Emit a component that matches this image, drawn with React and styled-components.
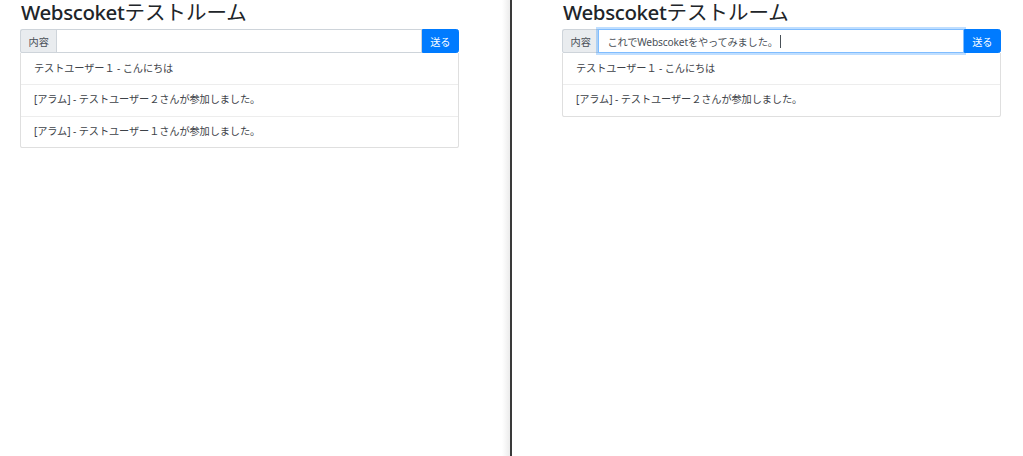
import React from "react";
import styled, { createGlobalStyle } from "styled-components";

const GlobalStyle = createGlobalStyle`
  html, body {
    margin: 0;
    padding: 0;
    background: #fff;
  }
  body {
    font-family: "Noto Sans", "Noto Sans CJK JP", sans-serif;
    color: #212529;
  }
`;

const rooms = [
  {
    side: "left",
    typing: "",
    focused: false,
    messages: [
      "テストユーザー１ - こんにちは",
      "[アラム] - テストユーザー２さんが参加しました。",
      "[アラム] - テストユーザー１さんが参加しました。",
    ],
  },
  {
    side: "right",
    typing: "これでWebscoketをやってみました。",
    focused: true,
    messages: [
      "テストユーザー１ - こんにちは",
      "[アラム] - テストユーザー２さんが参加しました。",
    ],
  },
];

const App = () => {
  return (
    <Screen>
      <GlobalStyle />
      {rooms.map((room, index) => (
        <React.Fragment key={room.side}>
          {index > 0 && <Divider />}
          <Pane side={room.side}>
            <Room>
              <Title>
                Webscoket<TitleJa>テストルーム</TitleJa>
              </Title>
              <InputGroup>
                <Addon>内容</Addon>
                <Field focused={room.focused}>
                  {room.typing}
                  {room.focused && <Caret />}
                </Field>
                <SendButton>送る</SendButton>
              </InputGroup>
              <List>
                {room.messages.map((msg, i) => (
                  <Item key={i}>{msg}</Item>
                ))}
              </List>
            </Room>
          </Pane>
        </React.Fragment>
      ))}
    </Screen>
  );
};

const Screen = styled.div`
  display: flex;
  width: 100%;
  height: 100vh;
  overflow: hidden;
`;

const Pane = styled.div`
  box-sizing: border-box;
  flex: ${(props) => (props.side === "left" ? "0 0 510px" : "1")};
  padding-left: ${(props) => (props.side === "left" ? "20px" : "50px")};
  background: ${(props) =>
    props.side === "left"
      ? "linear-gradient(to right, #fff 0, #fff 502px, #f3f3f3 507px, #ebebeb 510px)"
      : "#fff"};
`;

const Divider = styled.div`
  flex: 0 0 2px;
  background: #3a3a3a;
`;

const Room = styled.div`
  width: 439px;
`;

const Title = styled.h2`
  margin: 0 0 4px 1px;
  font-size: 20.5px;
  font-weight: 500;
  line-height: 25px;
  color: #212529;
  letter-spacing: -0.4px;
`;

const TitleJa = styled.span`
  font-weight: 400;
  letter-spacing: 0;
`;

const InputGroup = styled.div`
  display: flex;
  align-items: stretch;
  height: 24px;
  font-size: 10.2px;
`;

const Addon = styled.div`
  display: flex;
  align-items: center;
  box-sizing: border-box;
  padding: 0 7.5px;
  background: #e9ecef;
  color: #495057;
  border: 1px solid #ced4da;
  border-right: none;
  border-radius: 2.6px 0 0 2.6px;
`;

const Field = styled.div`
  flex: 1;
  display: flex;
  align-items: center;
  box-sizing: border-box;
  padding: 0 8px;
  color: #495057;
  border: 1px solid ${(props) => (props.focused ? "#80bdff" : "#ced4da")};
  box-shadow: ${(props) =>
    props.focused ? "0 0 0 2px rgba(0, 123, 255, 0.25)" : "none"};
  position: relative;
  z-index: ${(props) => (props.focused ? 1 : 0)};
  white-space: nowrap;
  letter-spacing: -0.15px;
`;

const Caret = styled.span`
  display: inline-block;
  width: 1px;
  height: 13px;
  margin-left: 2px;
  background: #495057;
`;

const SendButton = styled.button`
  box-sizing: border-box;
  padding: 0 7.5px;
  margin: 0;
  font-family: inherit;
  font-size: 10.2px;
  color: #fff;
  background: #007bff;
  border: 1px solid #007bff;
  border-radius: 0 2.6px 2.6px 0;
  cursor: pointer;
`;

const List = styled.ul`
  margin: 0;
  padding: 0;
  list-style: none;
  border: 1px solid rgba(0, 0, 0, 0.125);
  border-top: none;
  border-radius: 0 0 2.6px 2.6px;
`;

const Item = styled.li`
  padding: 7.6px 13px;
  font-size: 10.2px;
  line-height: 15.6px;
  color: #3d4248;
  letter-spacing: -0.1px;
  & + & {
    border-top: 1px solid rgba(0, 0, 0, 0.07);
  }
`;

export default App;
